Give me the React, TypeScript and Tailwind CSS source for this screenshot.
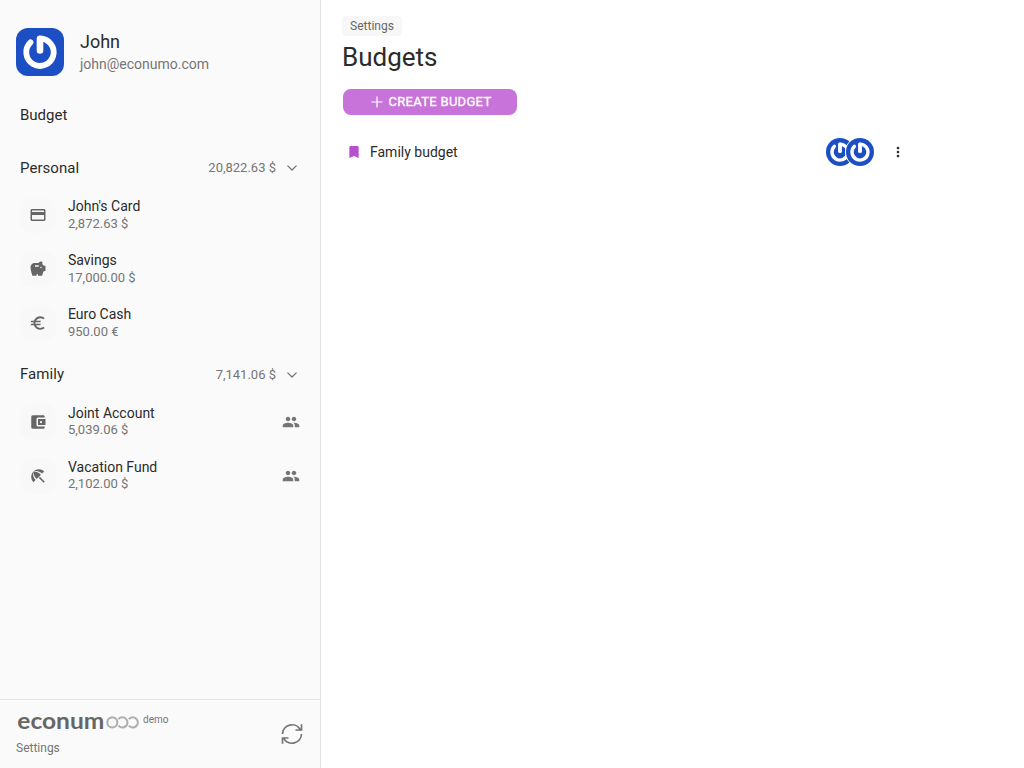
import type { ReactNode } from 'react';
import {
  MdAccountBalanceWallet,
  MdBeachAccess,
  MdBookmark,
  MdEuro,
  MdMoreVert,
  MdOutlineCreditCard,
  MdPeople,
  MdSavings,
} from 'react-icons/md';

interface Account {
  name: string;
  balance: string;
  icon: ReactNode;
  shared?: boolean;
}

const personal: Account[] = [
  { name: "John's Card", balance: '2,872.63 $', icon: <MdOutlineCreditCard /> },
  { name: 'Savings', balance: '17,000.00 $', icon: <MdSavings /> },
  { name: 'Euro Cash', balance: '950.00 €', icon: <MdEuro /> },
];

const family: Account[] = [
  { name: 'Joint Account', balance: '5,039.06 $', icon: <MdAccountBalanceWallet />, shared: true },
  { name: 'Vacation Fund', balance: '2,102.00 $', icon: <MdBeachAccess />, shared: true },
];

function Avatar({ className }: { className: string }) {
  return (
    <svg viewBox="0 0 48 48" className={className}>
      <rect width="48" height="48" fill="#1d4fc4" />
      <g fill="none" stroke="#fff" strokeLinecap="round" strokeLinejoin="round">
        <path d="M24 10.5A13.7 13.7 0 1 1 14.5 14.3" strokeWidth="5.8" />
        <path d="M24 11v11.5" strokeWidth="6.6" />
      </g>
    </svg>
  );
}

function Folder({ title, total, accounts }: { title: string; total: string; accounts: Account[] }) {
  return (
    <section>
      <div className="flex h-9 items-center pr-[22px] pl-5">
        <h2 className="flex-1 text-[15px] tracking-[0.05px] text-[#2b2b2b]">{title}</h2>
        <span className="mr-[10px] text-[13px] text-[#757575]">{total}</span>
        <svg viewBox="0 0 12 12" className="size-3" fill="none" stroke="#757575" strokeWidth="1.3">
          <path d="M1.5 3.6L6 8l4.5-4.4" />
        </svg>
      </div>
      <ul className="pt-[2px]">
        {accounts.map((account) => (
          <li key={account.name} className="flex h-[54px] items-center pr-5 pl-5">
            <div className="flex size-9 items-center justify-center rounded-xl bg-[#f8f8f8] text-[18px] text-[#666666]">
              {account.icon}
            </div>
            <div className="-mt-[0.7px] ml-3 flex-1">
              <p className="mb-[0.5px] text-[14px] leading-[18px] text-[#2b2b2b]">{account.name}</p>
              <p className="text-[13px] leading-4 text-[#757575]">{account.balance}</p>
            </div>
            {account.shared && <MdPeople className="size-[18px] text-[#757575]" />}
          </li>
        ))}
      </ul>
    </section>
  );
}

function Logo() {
  return (
    <svg width="124" height="30" viewBox="0 -5 124 30" className="overflow-visible">
      <text
        x="1.3"
        y="15.6"
        textLength="87"
        lengthAdjust="spacingAndGlyphs"
        fill="#666666"
        className="font-['Lato',sans-serif] text-[23px] font-bold"
      >
        econum
      </text>
      <g fill="none" stroke="#b0b0b0" strokeWidth="2.1">
        <circle cx="96.3" cy="9.4" r="5" />
        <path d="M102.4 6.2A5.1 5.1 0 1 1 102.4 12.6" />
        <path d="M112.8 6.2A5.1 5.1 0 1 1 112.8 12.6" />
      </g>
    </svg>
  );
}

export default function App() {
  return (
    <div className="flex h-screen overflow-hidden bg-white font-['Roboto',sans-serif] text-[#2b2b2b]">
      <aside className="flex w-[321px] shrink-0 flex-col border-r border-[#e2e2e2] bg-[#fafafa]">
        <div className="flex items-center gap-4 px-4 pt-7">
          <Avatar className="size-12 rounded-xl" />
          <div>
            <p className="text-[18px] leading-6">John</p>
            <p className="text-[14px] leading-5 text-[#757575]">john@econumo.com</p>
          </div>
        </div>
        <a className="mt-7 pl-5 text-[15px] leading-[22px]">Budget</a>
        <nav className="mt-6 flex flex-1 flex-col gap-[6.5px]">
          <Folder title="Personal" total="20,822.63 $" accounts={personal} />
          <Folder title="Family" total="7,141.06 $" accounts={family} />
        </nav>
        <footer className="flex h-[69px] items-center justify-between border-t border-[#e2e2e2] pr-[17px] pl-4">
          <div>
            <div className="flex h-6 items-center gap-[3px]">
              <Logo />
              <span className="pb-2 text-[10px] text-[#757575]">demo</span>
            </div>
            <p className="mt-[5px] mb-px text-[12px] leading-4 text-[#757575]">Settings</p>
          </div>
          <svg viewBox="0 0 22 22" className="size-[22px]" fill="none" stroke="#757575" strokeWidth="1.7">
            <path d="M1.5 11A9.5 9.5 0 0 1 19.2 6.5M20.5 1.3V7h-6" />
            <path d="M20.5 11A9.5 9.5 0 0 1 2.8 15.5M1.5 20.7V15h6" />
          </svg>
        </footer>
      </aside>
      <main className="flex-1 pt-4 pl-[21px]">
        <a className="flex h-5 w-[60px] items-center justify-center rounded bg-[#f7f7f7] text-[12px] text-[#666666]">
          Settings
        </a>
        <h1 className="mt-[5px] text-[26px] leading-8">Budgets</h1>
        <button className="mt-4 ml-px flex h-[26px] w-[174px] items-center justify-center gap-[6px] rounded-lg bg-[#c873d9] pl-[2px] text-[13px] tracking-[0.3px] text-white [-webkit-text-stroke:0.3px_#fff]">
          <svg viewBox="0 0 12 12" className="size-3" stroke="currentColor" strokeWidth="1.2">
            <path d="M6 .5v11M.5 6h11" />
          </svg>
          CREATE BUDGET
        </button>
        <div className="mt-[19px] flex h-9 w-[564px] items-center pl-1">
          <MdBookmark className="size-4 text-[#b84fcf]" />
          <span className="ml-2 flex-1 text-[14px]">Family budget</span>
          <div className="flex">
            <Avatar className="size-7 rounded-full" />
            <Avatar className="-ml-2 size-7 rounded-full ring-1 ring-white" />
          </div>
          <MdMoreVert className="ml-4 size-4" />
        </div>
      </main>
    </div>
  );
}
